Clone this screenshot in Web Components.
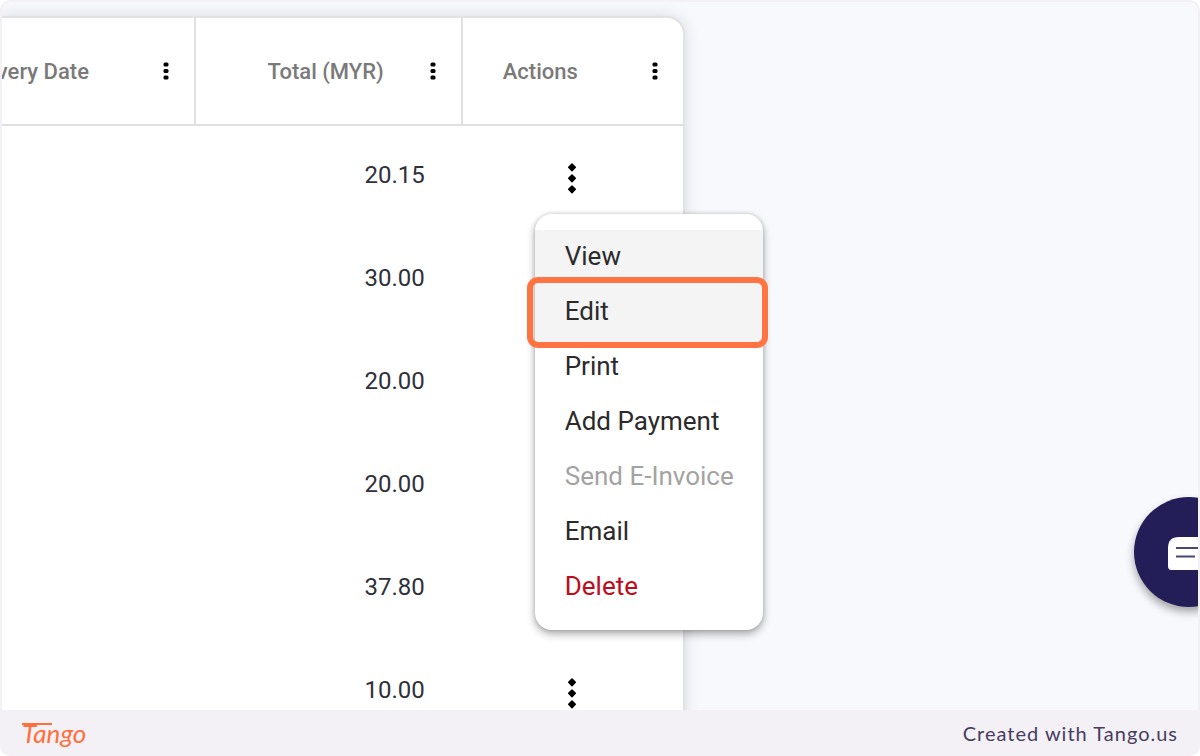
<!DOCTYPE html>
<html lang="en">
<head>
<meta charset="utf-8">
<meta name="viewport" content="width=device-width, initial-scale=1">
<title>Invoices</title>
<style>
  html, body { height: 100%; }
  body { margin: 0; background: #fff; font-family: Roboto, "Liberation Sans", sans-serif; }
</style>
</head>
<body>
<guide-frame>
  <invoice-table></invoice-table>
  <chat-button slot="float"></chat-button>
  <guide-footer slot="footer"></guide-footer>
</guide-frame>

<script>
  const define = (name, html, setup) => {
    const template = document.createElement('template');
    template.innerHTML = html;
    customElements.define(name, class extends HTMLElement {
      constructor() {
        super();
        this.attachShadow({ mode: 'open' }).append(template.content.cloneNode(true));
        if (setup) setup(this.shadowRoot, this);
      }
    });
  };

  define('guide-frame', `
    <style>
      :host { display: grid; grid-template-rows: minmax(0, 1fr) auto; height: 100%; box-sizing: border-box;
              border-radius: 10px; background: #f3f1f6; padding: 2px 2px 0; overflow: hidden; }
      main { position: relative; overflow: hidden; background: #f8f9fd; border-radius: 8px 8px 0 0; padding-top: 14px; }
    </style>
    <main><slot></slot><slot name="float"></slot></main>
    <slot name="footer"></slot>`);

  define('more-dots', `
    <style>
      :host { display: inline-block; }
      button { display: block; border: 0; padding: 0; background: none; cursor: pointer; color: #000; }
      svg { display: block; fill: currentColor; }
      .large { display: none; }
      :host([large]) .large { display: block; }
      :host([large]) .small { display: none; }
    </style>
    <button type="button" aria-label="More options">
      <svg class="small" width="8" height="20" viewBox="0 0 8 20"><rect x="1.500" y="1.500" width="5" height="4" rx="1.500"/><rect x="1.500" y="8" width="5" height="4" rx="1.500"/><rect x="1.500" y="14.500" width="5" height="4" rx="1.500"/></svg>
      <svg class="large" width="10" height="32" viewBox="0 0 10 32" stroke="currentColor" stroke-width="1.500" stroke-linejoin="round"><path d="M5 2 8.300 5.300 5 8.600 1.700 5.300ZM5 13 8.300 16.300 5 19.600 1.700 16.300ZM5 24 8.300 27.300 5 30.600 1.700 27.300Z"/></svg>
    </button>`);

  define('column-head', `
    <style>
      :host { display: flex; align-items: center; justify-content: flex-end; gap: 45px; padding-right: 24px;
              font-size: 22px; font-weight: 500; line-height: 28px; color: #7a7a7a; white-space: nowrap; }
      :host([spread]) { justify-content: space-between; padding-left: 40px; }
      :host([first]) { gap: 73px; }
      span { padding-top: 2px; }
    </style>
    <span><slot></slot></span><more-dots></more-dots>`);

  define('menu-item', `
    <style>
      :host { display: block; position: relative; }
      button { display: block; width: 100%; height: 55px; border: 0; padding: 0 30px 3px; background: none; text-align: left;
               font: inherit; font-size: 26px; line-height: 32px; color: #2b2b2b; white-space: nowrap; cursor: pointer; }
      :host([active]) button { background: #f4f4f4; }
      :host([muted]) button { color: #a3a3a3; }
      :host([danger]) button { color: #c00b1b; }
      :host([marked]) { z-index: 1; }
      :host([marked]) button { box-shadow: 0 2px #f4f4f4; }
      :host([marked])::after { content: ""; position: absolute; inset: -8px -5px -8px -8px; border: 6px solid #ff7442;
                               border-radius: 11px; pointer-events: none; }
    </style>
    <button type="button" role="menuitem"><slot></slot></button>`, (root, host) => {
      if (host.hasAttribute('muted')) root.querySelector('button').disabled = true;
    });

  define('action-menu', `
    <style>
      :host { display: block; box-sizing: border-box; width: 228px; padding: 16px 0 15px; border-radius: 17px;
              background: #fff; box-shadow: 0 4px 9px rgba(0,0,0,.32), 0 0 4px rgba(0,0,0,.16); }
    </style>
    <div role="menu">
      <menu-item active>View</menu-item>
      <menu-item active marked>Edit</menu-item>
      <menu-item>Print</menu-item>
      <menu-item>Add Payment</menu-item>
      <menu-item muted>Send E-Invoice</menu-item>
      <menu-item>Email</menu-item>
      <menu-item danger>Delete</menu-item>
    </div>`);

  define('invoice-table', `
    <style>
      :host { display: block; width: calc(57% + 1px); box-sizing: border-box; border: solid #e2e2e3; border-width: 2px 2px 0 0;
              border-radius: 0 18px 0 0; background: #fff; box-shadow: 0 0 16px rgba(60,60,80,.16); }
      table { width: 100%; table-layout: fixed; border-collapse: separate; border-spacing: 0; }
      col:nth-child(1) { width: 28.2%; }
      col:nth-child(2) { width: 39.2%; }
      col:nth-child(3) { width: 32.6%; }
      th, td { padding: 0; }
      th { height: 106px; border-bottom: 2px solid #e0e0e0; }
      th + th { border-left: 2px solid #e0e0e0; }
      .clip { overflow: hidden; }
      td { height: 103px; font-size: 24px; line-height: 28px; color: #30303a; }
      .amount { text-align: right; padding: 0 36px 6px 0; box-sizing: border-box; }
      .actions { position: relative; text-align: center; }
      .actions more-dots { vertical-align: middle; }
      action-menu { position: absolute; top: 88px; right: -80px; z-index: 2; }
    </style>
    <table>
      <colgroup><col><col><col></colgroup>
      <thead><tr>
        <th class="clip"><column-head first>very Date</column-head></th>
        <th><column-head>Total (MYR)</column-head></th>
        <th><column-head spread>Actions</column-head></th>
      </tr></thead>
      <tbody></tbody>
    </table>`, root => {
      root.querySelector('tbody').innerHTML = ['20.15', '30.00', '20.00', '20.00', '37.80', '10.00'].map((v, i) =>
        `<tr><td></td><td class="amount">${v}</td><td class="actions"><more-dots large></more-dots>${i ? '' : '<action-menu></action-menu>'}</td></tr>`).join('');
    });

  define('chat-button', `
    <style>
      :host { position: absolute; right: -46px; bottom: 103px; }
      button { display: grid; place-items: center; width: 110px; height: 110px; border: 0; border-radius: 50%; padding: 4px 0 0;
               background: #231e58; box-shadow: 0 5px 8px rgba(0,0,0,.35); cursor: pointer; }
      svg { display: block; }
    </style>
    <button type="button" aria-label="Open chat">
      <svg width="44" height="40" viewBox="0 0 44 40"><path fill="#fff" d="M12 3H34Q43 3 43 12V36H4Q1 36 1 32V14Q1 3 12 3Z"/><path stroke="#4a4675" stroke-width="2" d="M9 14H36M9 22.500H28"/></svg>
    </button>`);

  define('guide-footer', `
    <style>
      :host { display: flex; align-items: center; justify-content: space-between; height: 46px; padding: 0 20px; }
      a { text-decoration: none; white-space: nowrap; }
      .brand { position: relative; font: italic 400 26px/32px Lato, sans-serif; color: #ff6f3d; }
      .brand::before { content: ""; position: absolute; left: 0; top: 6px; width: 30px; height: 2px; background: currentColor; }
      .credit { font: 400 20px/28px Lato, sans-serif; letter-spacing: 1px; color: #483c5f; }
    </style>
    <a class="brand" href="#tango">Tango</a>
    <a class="credit" href="#about">Created with Tango.us</a>`);
</script>
</body>
</html>
